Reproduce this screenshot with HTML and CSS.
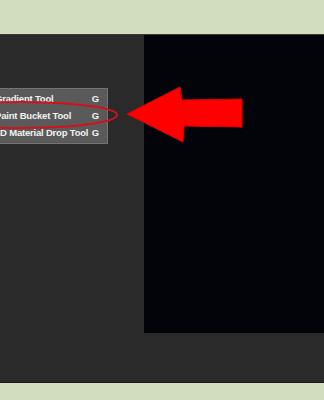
FILE: index.html
```html
<!DOCTYPE html>
<html lang="en">
<head>
    <meta charset="UTF-8">
    <meta name="viewport" content="width=device-width, initial-scale=1.0">
    <title>Paint Bucket Tool</title>
    <link rel="stylesheet" href="styles.css">
</head>
<body>
    <div class="frame">
        <div class="workspace">
            <div class="tools-side">
                <ul class="tool-menu">
                    <li><span class="tool-name">Gradient Tool</span><span class="tool-key">G</span></li>
                    <li><span class="tool-name">Paint Bucket Tool</span><span class="tool-key">G</span></li>
                    <li><span class="tool-name">3D Material Drop Tool</span><span class="tool-key">G</span></li>
                </ul>
            </div>
            <div class="canvas"></div>

            <!-- Annotation drawn over the screenshot -->
            <svg class="annotation" width="324" height="349" viewBox="0 34 324 349">
                <ellipse cx="20" cy="115" rx="97" ry="13" fill="none" stroke="#d0121e" stroke-width="2"/>
                <polygon points="127,114 180,87 182,100 242,99 242,127 184,126 183,142" fill="#ff0000" stroke="#e00000" stroke-width="1"/>
            </svg>
        </div>
    </div>
</body>
</html>
```

FILE: styles.css
```css
/* Page */
body {
    margin: 0;
    background-color: #d2ddbf;
    font-family: 'Liberation Sans', Arial, sans-serif;
    overflow: hidden;
}

.frame {
    padding: 34px 0 17px;
}

/* Editor area */
.workspace {
    position: relative;
    display: flex;
    height: 349px;
    background-color: #2a2a2a;
    border-top: 1px solid #3a3c34;
    border-bottom: 1px solid #1a1a1a;
    box-sizing: border-box;
}

.tools-side {
    width: 144px;
    padding-top: 53px;
}

.canvas {
    flex: 1;
    height: 298px;
    background-color: #03030a;
}

/* Tool flyout */
.tool-menu {
    list-style: none;
    margin: 0 0 0 -14px;
    padding: 1px 0 2px;
    width: 122px;
    background-color: #5a5a5a;
    border: 1px solid #737373;
    box-sizing: border-box;
}

.tool-menu li {
    display: flex;
    justify-content: space-between;
    align-items: center;
    height: 17px;
    padding: 0 8px 0 8px;
    color: #f2f2f2;
    font-size: 9.5px;
    font-weight: bold;
    letter-spacing: -0.2px;
}

.annotation {
    position: absolute;
    left: 0;
    top: -1px;
}
```
